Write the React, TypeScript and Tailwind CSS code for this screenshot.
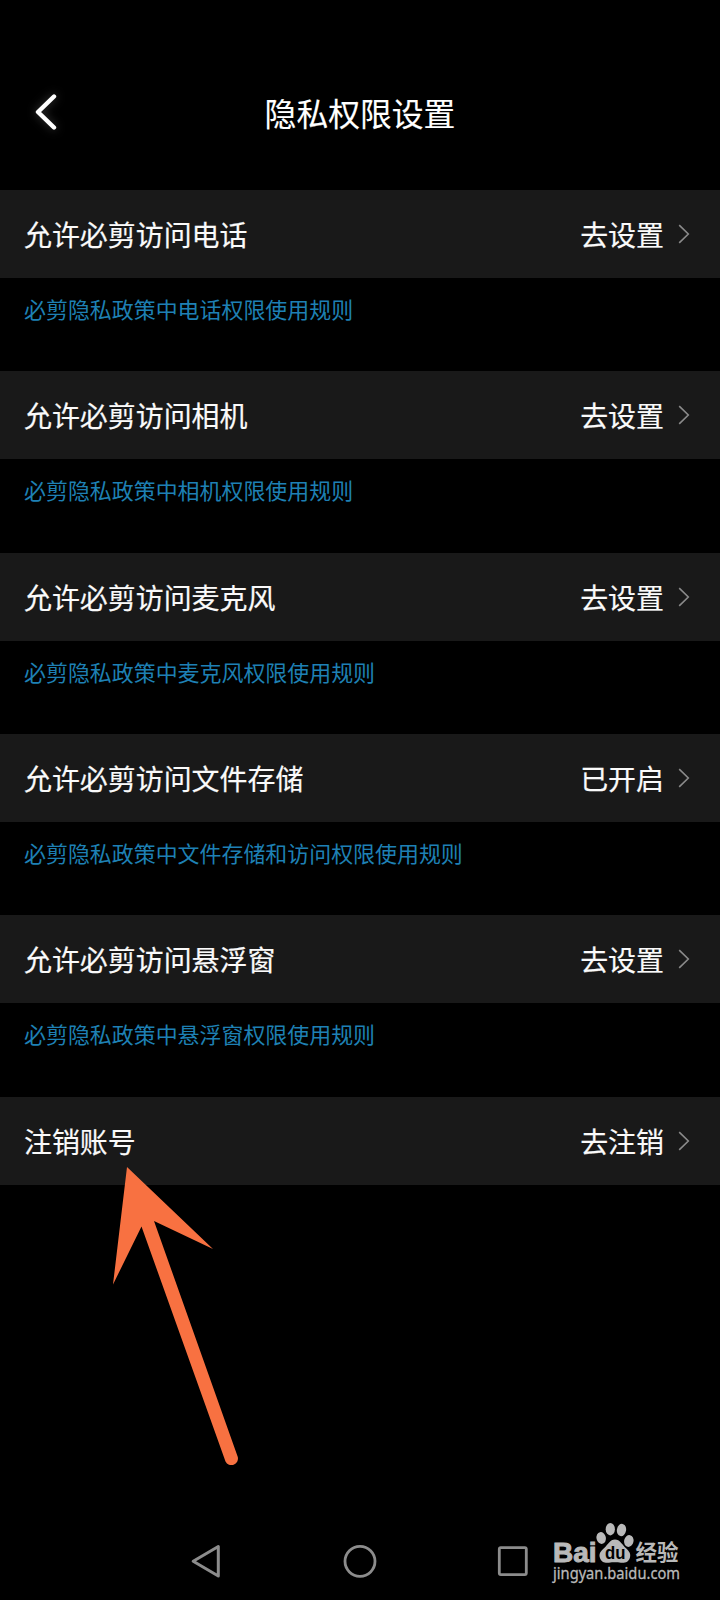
type PermissionItem = {
    label: string;
    action: string;
    rule?: string;
};

const items: PermissionItem[] = [
    { label: "允许必剪访问电话", action: "去设置", rule: "必剪隐私政策中电话权限使用规则" },
    { label: "允许必剪访问相机", action: "去设置", rule: "必剪隐私政策中相机权限使用规则" },
    { label: "允许必剪访问麦克风", action: "去设置", rule: "必剪隐私政策中麦克风权限使用规则" },
    { label: "允许必剪访问文件存储", action: "已开启", rule: "必剪隐私政策中文件存储和访问权限使用规则" },
    { label: "允许必剪访问悬浮窗", action: "去设置", rule: "必剪隐私政策中悬浮窗权限使用规则" },
    { label: "注销账号", action: "去注销" },
];

const PermissionRow: React.FC<{ item: PermissionItem }> = ({ item }) => {
    return (
        <li>
            <button type="button" className="flex h-[88px] w-full items-center bg-[#191919] pr-[30px] pl-6 text-[27.95px] leading-10 text-[#fafafa] [-webkit-text-stroke:0.2px_#fafafa]">
                <span>{item.label}</span>
                <span className="ml-auto">{item.action}</span>
                <svg className="ml-[14px] h-5 w-3" viewBox="0 0 12 20" fill="none" stroke="#8a8a8a" strokeWidth="1.6">
                    <path d="M1.2 1.2 10.3 10 1.2 18.8" />
                </svg>
            </button>
            {item.rule && (
                <div className="h-[93.34px] pt-[15px] pl-6">
                    <a className="block text-[21.95px] leading-8 text-[#1e80b4]">{item.rule}</a>
                </div>
            )}
        </li>
    );
};

const Arrow = () => (
    <svg className="absolute top-[1160px] left-[100px]" width="150" height="310" viewBox="0 0 150 310" fill="#f87141">
        <path d="M27 7 113 89 54 61 137.8 297A6.6 6.6 0 0 1 125.5 301.5L41.5 66.500 13 124.500Z" />
    </svg>
);

const Watermark = () => (
    <svg className="absolute top-[1515px] left-[545px]" width="150" height="75" viewBox="0 0 150 75" fill="#b9b9b9">
        <text x="8" y="46.5" textLength="43.5" lengthAdjust="spacingAndGlyphs" fontFamily="Liberation Sans, sans-serif" fontWeight="700" fontSize="28.5" stroke="#b9b9b9" strokeWidth="1">
            Bai
        </text>
        <ellipse cx="56.2" cy="23" rx="4.7" ry="6" transform="rotate(-12 56.2 23)" />
        <ellipse cx="65.3" cy="14.2" rx="4.6" ry="6.2" />
        <ellipse cx="76.5" cy="15" rx="4.6" ry="6.2" transform="rotate(10 76.5 15)" />
        <ellipse cx="83.8" cy="26" rx="4.7" ry="6" transform="rotate(12 83.8 26)" />
        <path d="M70 24.5c-5 0-7 5-10.5 8.2-4 3.5-5.8 6-4.6 10 1.2 4.2 5 5.6 9 5 4-.6 8-.6 12 0 4 .6 7.8-.8 9-5 1.2-4-.6-6.5-4.4-10-3.5-3.2-5.5-8.2-10.5-8.2z" />
        <text x="60" y="43.5" textLength="20.5" lengthAdjust="spacingAndGlyphs" fontFamily="Liberation Sans, sans-serif" fontWeight="700" fontSize="17.5" fill="#000">
            du
        </text>
        <text x="90.5" y="45" textLength="43" lengthAdjust="spacingAndGlyphs" fontFamily="Noto Sans CJK SC, sans-serif" fontWeight="700" fontSize="22">
            经验
        </text>
        <text x="8" y="63.5" textLength="127" lengthAdjust="spacingAndGlyphs" fontFamily="Noto Sans, sans-serif" fontSize="16" stroke="#b9b9b9" strokeWidth="0.3">
            jingyan.baidu.com
        </text>
    </svg>
);

const App = () => {
    return (
        <div className="relative flex h-[1600px] w-[720px] flex-col overflow-hidden bg-black font-['Noto_Sans_CJK_SC',sans-serif]">
            <header className="grid h-[190px] grid-cols-[96px_1fr_96px] items-center pt-[36px]">
                <button type="button" className="pl-[31px]" aria-label="返回">
                    <svg className="drop-shadow-[0_0_5px_rgba(255,255,255,0.25)]" width="30" height="40" viewBox="0 0 30 40" fill="none" stroke="#fff" strokeWidth="4.4" strokeLinecap="round" strokeLinejoin="round">
                        <path d="M23 3.5 7 19 23 34.5" />
                    </svg>
                </button>
                <h1 className="pb-[3px] text-center text-[31.8px] leading-10 text-white [-webkit-text-stroke:0.15px_white]">隐私权限设置</h1>
            </header>

            <ul>
                {items.map((item) => (
                    <PermissionRow key={item.label} item={item} />
                ))}
            </ul>

            {/* System navigation */}
            <nav className="mt-auto grid h-[77px] grid-cols-3 px-[131px]">
                <svg className="mt-[18px] ml-[55px]" width="40" height="40" viewBox="0 0 40 40" fill="none" stroke="#8c8c8c" strokeWidth="3" strokeLinejoin="round">
                    <path d="M32.3 5.5V35L7.2 20.3Z" />
                </svg>
                <svg className="mt-[18px] justify-self-center" width="40" height="40" viewBox="0 0 40 40" fill="none" stroke="#8c8c8c" strokeWidth="2.8">
                    <circle cx="20" cy="20.3" r="15" />
                </svg>
                <svg className="mt-[18px] mr-[56px] justify-self-end" width="40" height="40" viewBox="0 0 40 40" fill="none" stroke="#8c8c8c" strokeWidth="2.8">
                    <rect x="6.3" y="6.6" width="27" height="27" rx="1.5" />
                </svg>
            </nav>

            <Arrow />
            <Watermark />
        </div>
    );
};

export default App;
